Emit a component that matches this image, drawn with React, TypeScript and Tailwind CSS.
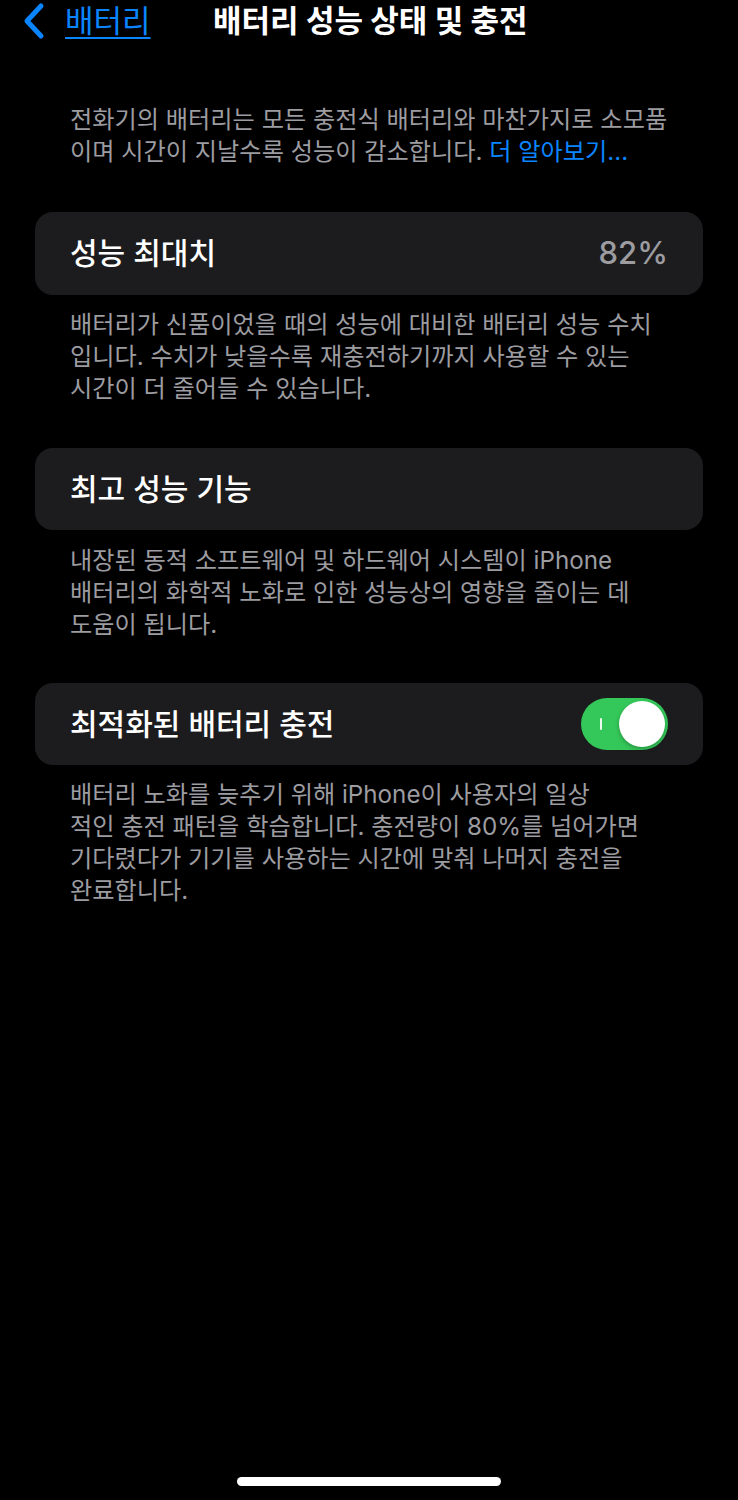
import React, { useState } from 'react';

const FONT = '"Inter", "Noto Sans CJK KR", "Noto Sans", sans-serif';

const Toggle: React.FC<{ on: boolean; onChange: (v: boolean) => void }> = ({ on, onChange }) => (
  <button
    onClick={() => onChange(!on)}
    className={`relative flex items-center w-[87px] h-[52px] rounded-full px-[3px] ${on ? 'bg-[#34c759] justify-end' : 'bg-[#39393d] justify-start'}`}
  >
    {on && <span className="absolute left-[19px] top-[20px] w-[2px] h-[12px] bg-white/90 rounded-full" />}
    <span className="w-[46px] h-[46px] rounded-full bg-white shadow-[0_2px_4px_rgba(0,0,0,0.25)]" />
  </button>
);

const Footer: React.FC<{ children: React.ReactNode; className?: string }> = ({ children, className }) => (
  <p className={`px-[70px] text-[24.2px] leading-[32px] text-[#9c9ca1] ${className || ''}`}>
    {children}
  </p>
);

export default function App() {
  const [optimized, setOptimized] = useState(true);

  return (
    <div className="flex flex-col w-[738px] h-[1500px] bg-black text-white" style={{ fontFamily: FONT }}>
      {/* 상단 내비게이션 */}
      <div className="relative flex items-center h-[42px]">
        <div className="flex items-center pl-[22px]">
          <svg width="24" height="38" viewBox="0 0 24 38" fill="none">
            <path d="M19 4 L5 19 L19 34" stroke="#0a84ff" strokeWidth="5" strokeLinecap="round" strokeLinejoin="round" />
          </svg>
          <span className="ml-[19px] text-[31px] text-[#0a84ff] underline underline-offset-[5px] decoration-[2px]">배터리</span>
        </div>
        <h1 className="absolute left-[213px] text-[31px] font-bold">배터리 성능 상태 및 충전</h1>
      </div>

      <Footer className="mt-[62px]">
        전화기의 배터리는 모든 충전식 배터리와 마찬가지로 소모품
        <br />
        이며 시간이 지날수록 성능이 감소합니다. <span className="text-[#0a84ff]">더 알아보기...</span>
      </Footer>

      {/* 성능 최대치 */}
      <div className="mx-[35px] mt-[44px] h-[83px] rounded-[18px] bg-[#1c1c1e] flex items-center justify-between px-[35px]">
        <span className="text-[30px] font-medium">성능 최대치</span>
        <span className="text-[31px] text-[#9c9ca1] font-medium">82%</span>
      </div>
      <Footer className="mt-[14px]">
        배터리가 신품이었을 때의 성능에 대비한 배터리 성능 수치
        <br />
        입니다. 수치가 낮을수록 재충전하기까지 사용할 수 있는
        <br />
        시간이 더 줄어들 수 있습니다.
      </Footer>

      {/* 최고 성능 기능 */}
      <div className="mx-[35px] mt-[43px] h-[82px] rounded-[18px] bg-[#1c1c1e] flex items-center px-[35px]">
        <span className="text-[30px] font-medium">최고 성능 기능</span>
      </div>
      <Footer className="mt-[15px]">
        내장된 동적 소프트웨어 및 하드웨어 시스템이 iPhone
        <br />
        배터리의 화학적 노화로 인한 성능상의 영향을 줄이는 데
        <br />
        도움이 됩니다.
      </Footer>

      {/* 최적화된 배터리 충전 */}
      <div className="mx-[35px] mt-[42px] h-[82px] rounded-[18px] bg-[#1c1c1e] flex items-center justify-between pl-[35px] pr-[35px]">
        <span className="text-[30px] font-medium">최적화된 배터리 충전</span>
        <Toggle on={optimized} onChange={setOptimized} />
      </div>
      <Footer className="mt-[14px]">
        배터리 노화를 늦추기 위해 iPhone이 사용자의 일상
        <br />
        적인 충전 패턴을 학습합니다. 충전량이 80%를 넘어가면
        <br />
        기다렸다가 기기를 사용하는 시간에 맞춰 나머지 충전을
        <br />
        완료합니다.
      </Footer>

      {/* 홈 인디케이터 */}
      <div className="mt-auto mb-[14px] flex justify-center">
        <div className="w-[264px] h-[9px] rounded-full bg-white" />
      </div>
    </div>
  );
}
